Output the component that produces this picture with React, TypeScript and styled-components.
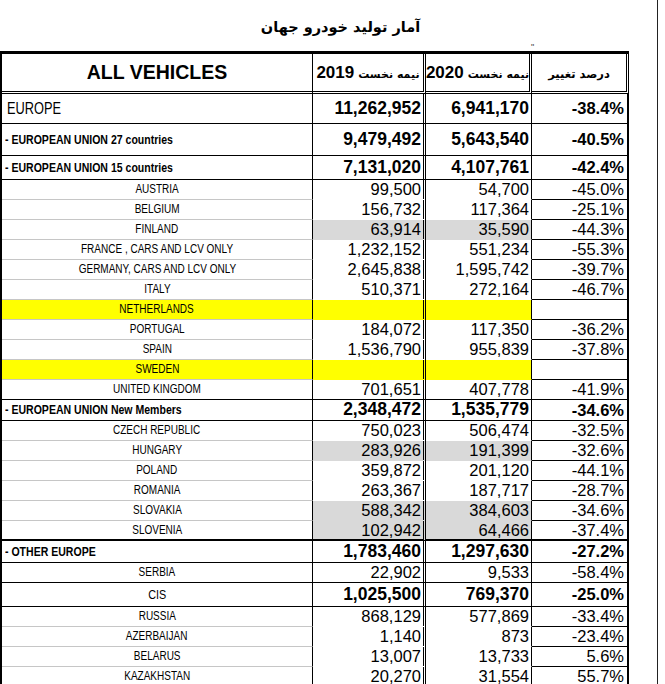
import React from 'react';
import styled, { createGlobalStyle, css } from 'styled-components';

const Global = createGlobalStyle`
  html, body { margin: 0; padding: 0; background: #fff; }
  body { font-family: "Liberation Sans", Arial, sans-serif; color: #000; }
  * { box-sizing: border-box; }
`;

type Kind = 'europe' | 'group' | 'country' | 'cis';
type Line = 'gray' | 'black' | 'thick';

interface RowData {
  label: string;
  v19?: string;
  v20?: string;
  pct?: string;
  kind: Kind;
  h: number;
  line?: Line;
  shade?: boolean;
  yellow?: boolean;
}

const rows: RowData[] = [
  { label: 'EUROPE', v19: '11,262,952', v20: '6,941,170', pct: '-38.4%', kind: 'europe', h: 30, line: 'black' },
  { label: '- EUROPEAN UNION 27 countries', v19: '9,479,492', v20: '5,643,540', pct: '-40.5%', kind: 'group', h: 32, line: 'black' },
  { label: '- EUROPEAN UNION 15 countries', v19: '7,131,020', v20: '4,107,761', pct: '-42.4%', kind: 'group', h: 24, line: 'black' },
  { label: 'AUSTRIA', v19: '99,500', v20: '54,700', pct: '-45.0%', kind: 'country', h: 20 },
  { label: 'BELGIUM', v19: '156,732', v20: '117,364', pct: '-25.1%', kind: 'country', h: 20 },
  { label: 'FINLAND', v19: '63,914', v20: '35,590', pct: '-44.3%', kind: 'country', h: 20, shade: true },
  { label: 'FRANCE ,  CARS AND LCV ONLY', v19: '1,232,152', v20: '551,234', pct: '-55.3%', kind: 'country', h: 20 },
  { label: 'GERMANY, CARS AND LCV ONLY', v19: '2,645,838', v20: '1,595,742', pct: '-39.7%', kind: 'country', h: 20 },
  { label: 'ITALY', v19: '510,371', v20: '272,164', pct: '-46.7%', kind: 'country', h: 20 },
  { label: 'NETHERLANDS', kind: 'country', h: 20, yellow: true },
  { label: 'PORTUGAL', v19: '184,072', v20: '117,350', pct: '-36.2%', kind: 'country', h: 20 },
  { label: 'SPAIN', v19: '1,536,790', v20: '955,839', pct: '-37.8%', kind: 'country', h: 20 },
  { label: 'SWEDEN', kind: 'country', h: 20, yellow: true },
  { label: 'UNITED KINGDOM', v19: '701,651', v20: '407,778', pct: '-41.9%', kind: 'country', h: 20, line: 'black' },
  { label: '- EUROPEAN UNION New Members', v19: '2,348,472', v20: '1,535,779', pct: '-34.6%', kind: 'group', h: 21, line: 'black' },
  { label: 'CZECH REPUBLIC', v19: '750,023', v20: '506,474', pct: '-32.5%', kind: 'country', h: 20 },
  { label: 'HUNGARY', v19: '283,926', v20: '191,399', pct: '-32.6%', kind: 'country', h: 20, shade: true },
  { label: 'POLAND', v19: '359,872', v20: '201,120', pct: '-44.1%', kind: 'country', h: 20 },
  { label: 'ROMANIA', v19: '263,367', v20: '187,717', pct: '-28.7%', kind: 'country', h: 20 },
  { label: 'SLOVAKIA', v19: '588,342', v20: '384,603', pct: '-34.6%', kind: 'country', h: 20, shade: true },
  { label: 'SLOVENIA', v19: '102,942', v20: '64,466', pct: '-37.4%', kind: 'country', h: 20, shade: true, line: 'thick' },
  { label: '- OTHER EUROPE', v19: '1,783,460', v20: '1,297,630', pct: '-27.2%', kind: 'group', h: 22, line: 'black' },
  { label: 'SERBIA', v19: '22,902', v20: '9,533', pct: '-58.4%', kind: 'country', h: 20, line: 'black' },
  { label: 'CIS', v19: '1,025,500', v20: '769,370', pct: '-25.0%', kind: 'cis', h: 24, line: 'black' },
  { label: 'RUSSIA', v19: '868,129', v20: '577,869', pct: '-33.4%', kind: 'country', h: 20 },
  { label: 'AZERBAIJAN', v19: '1,140', v20: '873', pct: '-23.4%', kind: 'country', h: 20 },
  { label: 'BELARUS', v19: '13,007', v20: '13,733', pct: '5.6%', kind: 'country', h: 20 },
  { label: 'KAZAKHSTAN', v19: '20,270', v20: '31,554', pct: '55.7%', kind: 'country', h: 20 },
];

const Page = styled.div`
  position: relative;
  width: 658px;
  height: 684px;
  border-right: 1px solid #222;
  overflow: hidden;
`;

const Title = styled.h1`
  margin: 0;
  height: 51px;
  display: flex;
  align-items: center;
  justify-content: center;
  padding: 2px 0 0 24px;
  font-family: "DejaVu Sans", sans-serif;
  font-size: 14.5px;
  font-weight: bold;
`;

const Tick = styled.span`
  position: absolute;
  left: 531px;
  top: 43px;
  font-size: 9px;
  line-height: 1;
  color: #444;
`;

const Sheet = styled.table`
  border-collapse: separate;
  border-spacing: 0;
  table-layout: fixed;
  width: 629px;
  border-left: 2px solid #000;
  border-top: 3px solid #000;
`;

const lineColor = (line: Line) => (line === 'gray' ? '#c6c6c6' : '#000');

const HeadCell = styled.th<{ $w: number; $edge: 'single' | 'double' }>`
  width: ${(p) => p.$w}px;
  height: 40px;
  padding: 0 2px;
  border-bottom: 3px double #000;
  border-right: ${(p) => (p.$edge === 'single' ? '1px solid #000' : '3px double #000')};
  vertical-align: middle;
`;

const AllVehicles = styled.span`
  font-family: "Liberation Sans", Arial, sans-serif;
  font-size: 19.5px;
  font-weight: bold;
`;

const HalfLabel = styled.span`
  display: flex;
  direction: rtl;
  justify-content: center;
  align-items: baseline;
  gap: 4px;
  white-space: nowrap;
  font-family: "DejaVu Sans", sans-serif;
  font-size: 11px;
  font-weight: bold;
`;

const Year = styled.span`
  font-family: "Liberation Sans", Arial, sans-serif;
  font-size: 17px;
  font-weight: bold;
`;

const ChangeLabel = styled.span`
  font-family: "DejaVu Sans", sans-serif;
  font-size: 11.5px;
  font-weight: bold;
`;

const LabelCell = styled.td<{ $kind: Kind; $line: Line; $yellow?: boolean; $h: number }>`
  height: ${(p) => p.$h}px;
  padding: 0 4px;
  white-space: nowrap;
  overflow: hidden;
  border-right: 1px solid #000;
  border-bottom: ${(p) => (p.$line === 'thick' ? '2px' : '1px')} solid ${(p) => lineColor(p.$line)};
  background: ${(p) => (p.$yellow ? '#ffff00' : '#fff')};
  font-family: "Liberation Sans", Arial, sans-serif;
  line-height: 1;
  vertical-align: middle;
  text-align: ${(p) => (p.$kind === 'country' || p.$kind === 'cis' ? 'center' : 'left')};
  ${(p) => p.$kind === 'country' && css`font-size: 12.5px;`}
  ${(p) => p.$kind === 'cis' && css`font-size: 13.5px;`}
  ${(p) =>
    p.$kind === 'group' &&
    css`
      font-size: 13.5px;
      font-weight: bold;
      padding-left: 3px;
    `}
  ${(p) =>
    p.$kind === 'europe' &&
    css`
      font-size: 16px;
      padding-left: 5px;
    `}
`;

/* Arial Narrow look: the sheet uses a condensed face */
const Narrow = styled.span<{ $origin: 'left' | 'center'; $scale: number }>`
  display: inline-block;
  transform: scaleX(${(p) => p.$scale});
  transform-origin: ${(p) => p.$origin} center;
`;

const NumCell = styled.td<{ $bold: boolean; $line: Line; $shade?: boolean; $yellow?: boolean; $double?: boolean }>`
  padding: 0 2px 0 0;
  text-align: right;
  white-space: nowrap;
  font-family: "Liberation Sans", Arial, sans-serif;
  font-size: ${(p) => (p.$bold ? '17.5px' : '16.5px')};
  font-weight: ${(p) => (p.$bold ? 'bold' : 'normal')};
  line-height: 1;
  vertical-align: middle;
  border-right: ${(p) => (p.$double ? '3px double #000' : '1px solid #000')};
  border-bottom: ${(p) =>
    p.$line === 'thick' ? '2px solid #000' : p.$line === 'black' ? '1px solid #000' : '1px solid transparent'};
  background: ${(p) => (p.$yellow ? '#ffff00' : p.$shade ? '#d9d9d9' : '#fff')};
`;

const PctCell = styled.td<{ $bold: boolean; $line: Line }>`
  padding: 0 3px 0 0;
  text-align: right;
  white-space: nowrap;
  font-family: "Liberation Sans", Arial, sans-serif;
  font-size: 16.5px;
  font-weight: ${(p) => (p.$bold ? 'bold' : 'normal')};
  line-height: 1;
  vertical-align: middle;
  border-right: 2px solid #000;
  border-bottom: ${(p) => (p.$line === 'thick' ? '2px' : '1px')} solid #000;
  background: #fff;
`;

export default function App() {
  return (
    <>
      <Global />
      <Page>
        <Title>آمار تولید خودرو جهان</Title>
        <Tick>"</Tick>
        <Sheet>
          <thead>
            <tr>
              <HeadCell $w={311} $edge="single">
                <AllVehicles>ALL VEHICLES</AllVehicles>
              </HeadCell>
              <HeadCell $w={113} $edge="double">
                <HalfLabel>
                  <span>نیمه نخست</span>
                  <Year>2019</Year>
                </HalfLabel>
              </HeadCell>
              <HeadCell $w={106} $edge="double">
                <HalfLabel>
                  <span>نیمه نخست</span>
                  <Year>2020</Year>
                </HalfLabel>
              </HeadCell>
              <HeadCell $w={97} $edge="double">
                <ChangeLabel>درصد تغییر</ChangeLabel>
              </HeadCell>
            </tr>
          </thead>
          <tbody>
            {rows.map((r) => {
              const line: Line = r.line ?? 'gray';
              const bold = r.kind !== 'country';
              const centered = r.kind === 'country' || r.kind === 'cis';
              const scale = r.kind === 'group' ? 0.78 : r.kind === 'europe' ? 0.8 : 0.8;
              return (
                <tr key={r.label}>
                  <LabelCell $kind={r.kind} $line={line} $yellow={r.yellow} $h={r.h}>
                    <Narrow $origin={centered ? 'center' : 'left'} $scale={scale}>
                      {r.label}
                    </Narrow>
                  </LabelCell>
                  <NumCell $bold={bold} $line={line} $shade={r.shade} $yellow={r.yellow} $double>
                    {r.v19}
                  </NumCell>
                  <NumCell $bold={bold} $line={line} $shade={r.shade} $yellow={r.yellow}>
                    {r.v20}
                  </NumCell>
                  <PctCell $bold={bold} $line={line}>
                    {r.pct}
                  </PctCell>
                </tr>
              );
            })}
          </tbody>
        </Sheet>
      </Page>
    </>
  );
}
